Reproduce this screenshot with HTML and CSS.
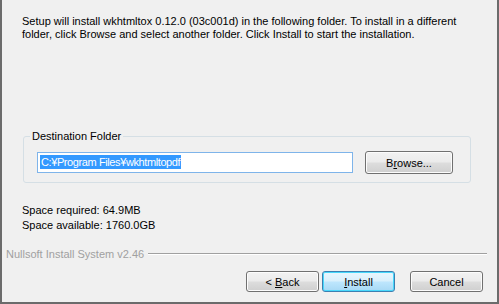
FILE: index.html
```html
<!DOCTYPE html>
<html lang="en">
<head>
    <meta charset="UTF-8">
    <title>wkhtmltox Setup</title>
    <link rel="stylesheet" href="styles.css">
</head>
<body>
    <div class="window">
        <p class="intro">Setup will install wkhtmltox 0.12.0 (03c001d) in the following folder. To install in a different folder, click Browse and select another folder. Click Install to start the installation.</p>

        <fieldset class="group">
            <legend>Destination Folder</legend>
            <div class="path-row">
                <div class="path-box"><span class="selected">C:&yen;Program Files&yen;wkhtmltopdf</span></div>
                <button class="btn browse">B<u>r</u>owse...</button>
            </div>
        </fieldset>

        <div class="space">
            <div>Space required: 64.9MB</div>
            <div>Space available: 1760.0GB</div>
        </div>

        <div class="brand">
            <span class="brand-text">Nullsoft Install System v2.46</span>
            <span class="brand-line"></span>
        </div>

        <div class="buttons">
            <button class="btn">&lt; <u>B</u>ack</button>
            <button class="btn default"><u>I</u>nstall</button>
            <button class="btn cancel">Cancel</button>
        </div>
    </div>
</body>
</html>
```

FILE: styles.css
```css
body {
    margin: 0;
    font-family: "Liberation Sans", Arial, sans-serif;
    font-size: 11px;
    color: #000;
}
.window {
    width: 499px;
    height: 304px;
    box-sizing: border-box;
    background-color: #f0f0f0;
    border: 2px solid #6b6b6b;
    border-top: none;
    padding-top: 15px;
}
.intro {
    margin: 0 0 0 20px;
    width: 440px;
    line-height: 13px;
}
.group {
    margin: 89px 0 0 21px;
    width: 448px;
    height: 53px;
    box-sizing: border-box;
    border: 1px solid #d5dfe5;
    border-radius: 3px;
    padding: 0;
}
.group legend {
    padding: 0 2px;
    margin-left: 6px;
    line-height: 13px;
}
.path-row {
    display: flex;
    align-items: center;
    margin: 8px 0 0 13px;
}
.path-box {
    width: 316px;
    height: 21px;
    box-sizing: border-box;
    border: 1px solid #7eb4ea;
    background-color: #fff;
    padding: 2px 0 0 2px;
    line-height: 15px;
}
.selected {
    background-color: #3399ff;
    color: #fff;
    padding: 1px 1px;
    letter-spacing: -0.4px;
}
.btn {
    font-family: inherit;
    font-size: 11px;
    color: #000;
    height: 21px;
    width: 73px;
    padding: 0;
    border: 1px solid #707070;
    border-radius: 3px;
    background: linear-gradient(#f2f2f2 0%, #ebebeb 48%, #dddddd 52%, #cfcfcf 100%);
    box-shadow: inset 0 0 0 1px #fcfcfc;
}
.browse {
    width: 88px;
    height: 23px;
    margin-left: 12px;
}
.default {
    border-color: #3c7fb1;
    background: linear-gradient(#eaf6fd 0%, #d9f0fc 48%, #bee6fd 52%, #a7d9f5 100%);
    box-shadow: inset 0 0 0 1px #48d8fb;
}
.space {
    margin: 20px 0 0 20px;
    line-height: 15px;
}
.brand {
    display: flex;
    align-items: center;
    margin: 15px 10px 0 4px;
    color: #a0a0a0;
}
.brand-line {
    flex: 1;
    margin-left: 4px;
    border-top: 1px solid #a0a0a0;
    border-bottom: 1px solid #fff;
}
.buttons {
    display: flex;
    justify-content: flex-end;
    gap: 3px;
    margin: 11px 14px 0 0;
}
.cancel {
    margin-left: 12px;
}
```
